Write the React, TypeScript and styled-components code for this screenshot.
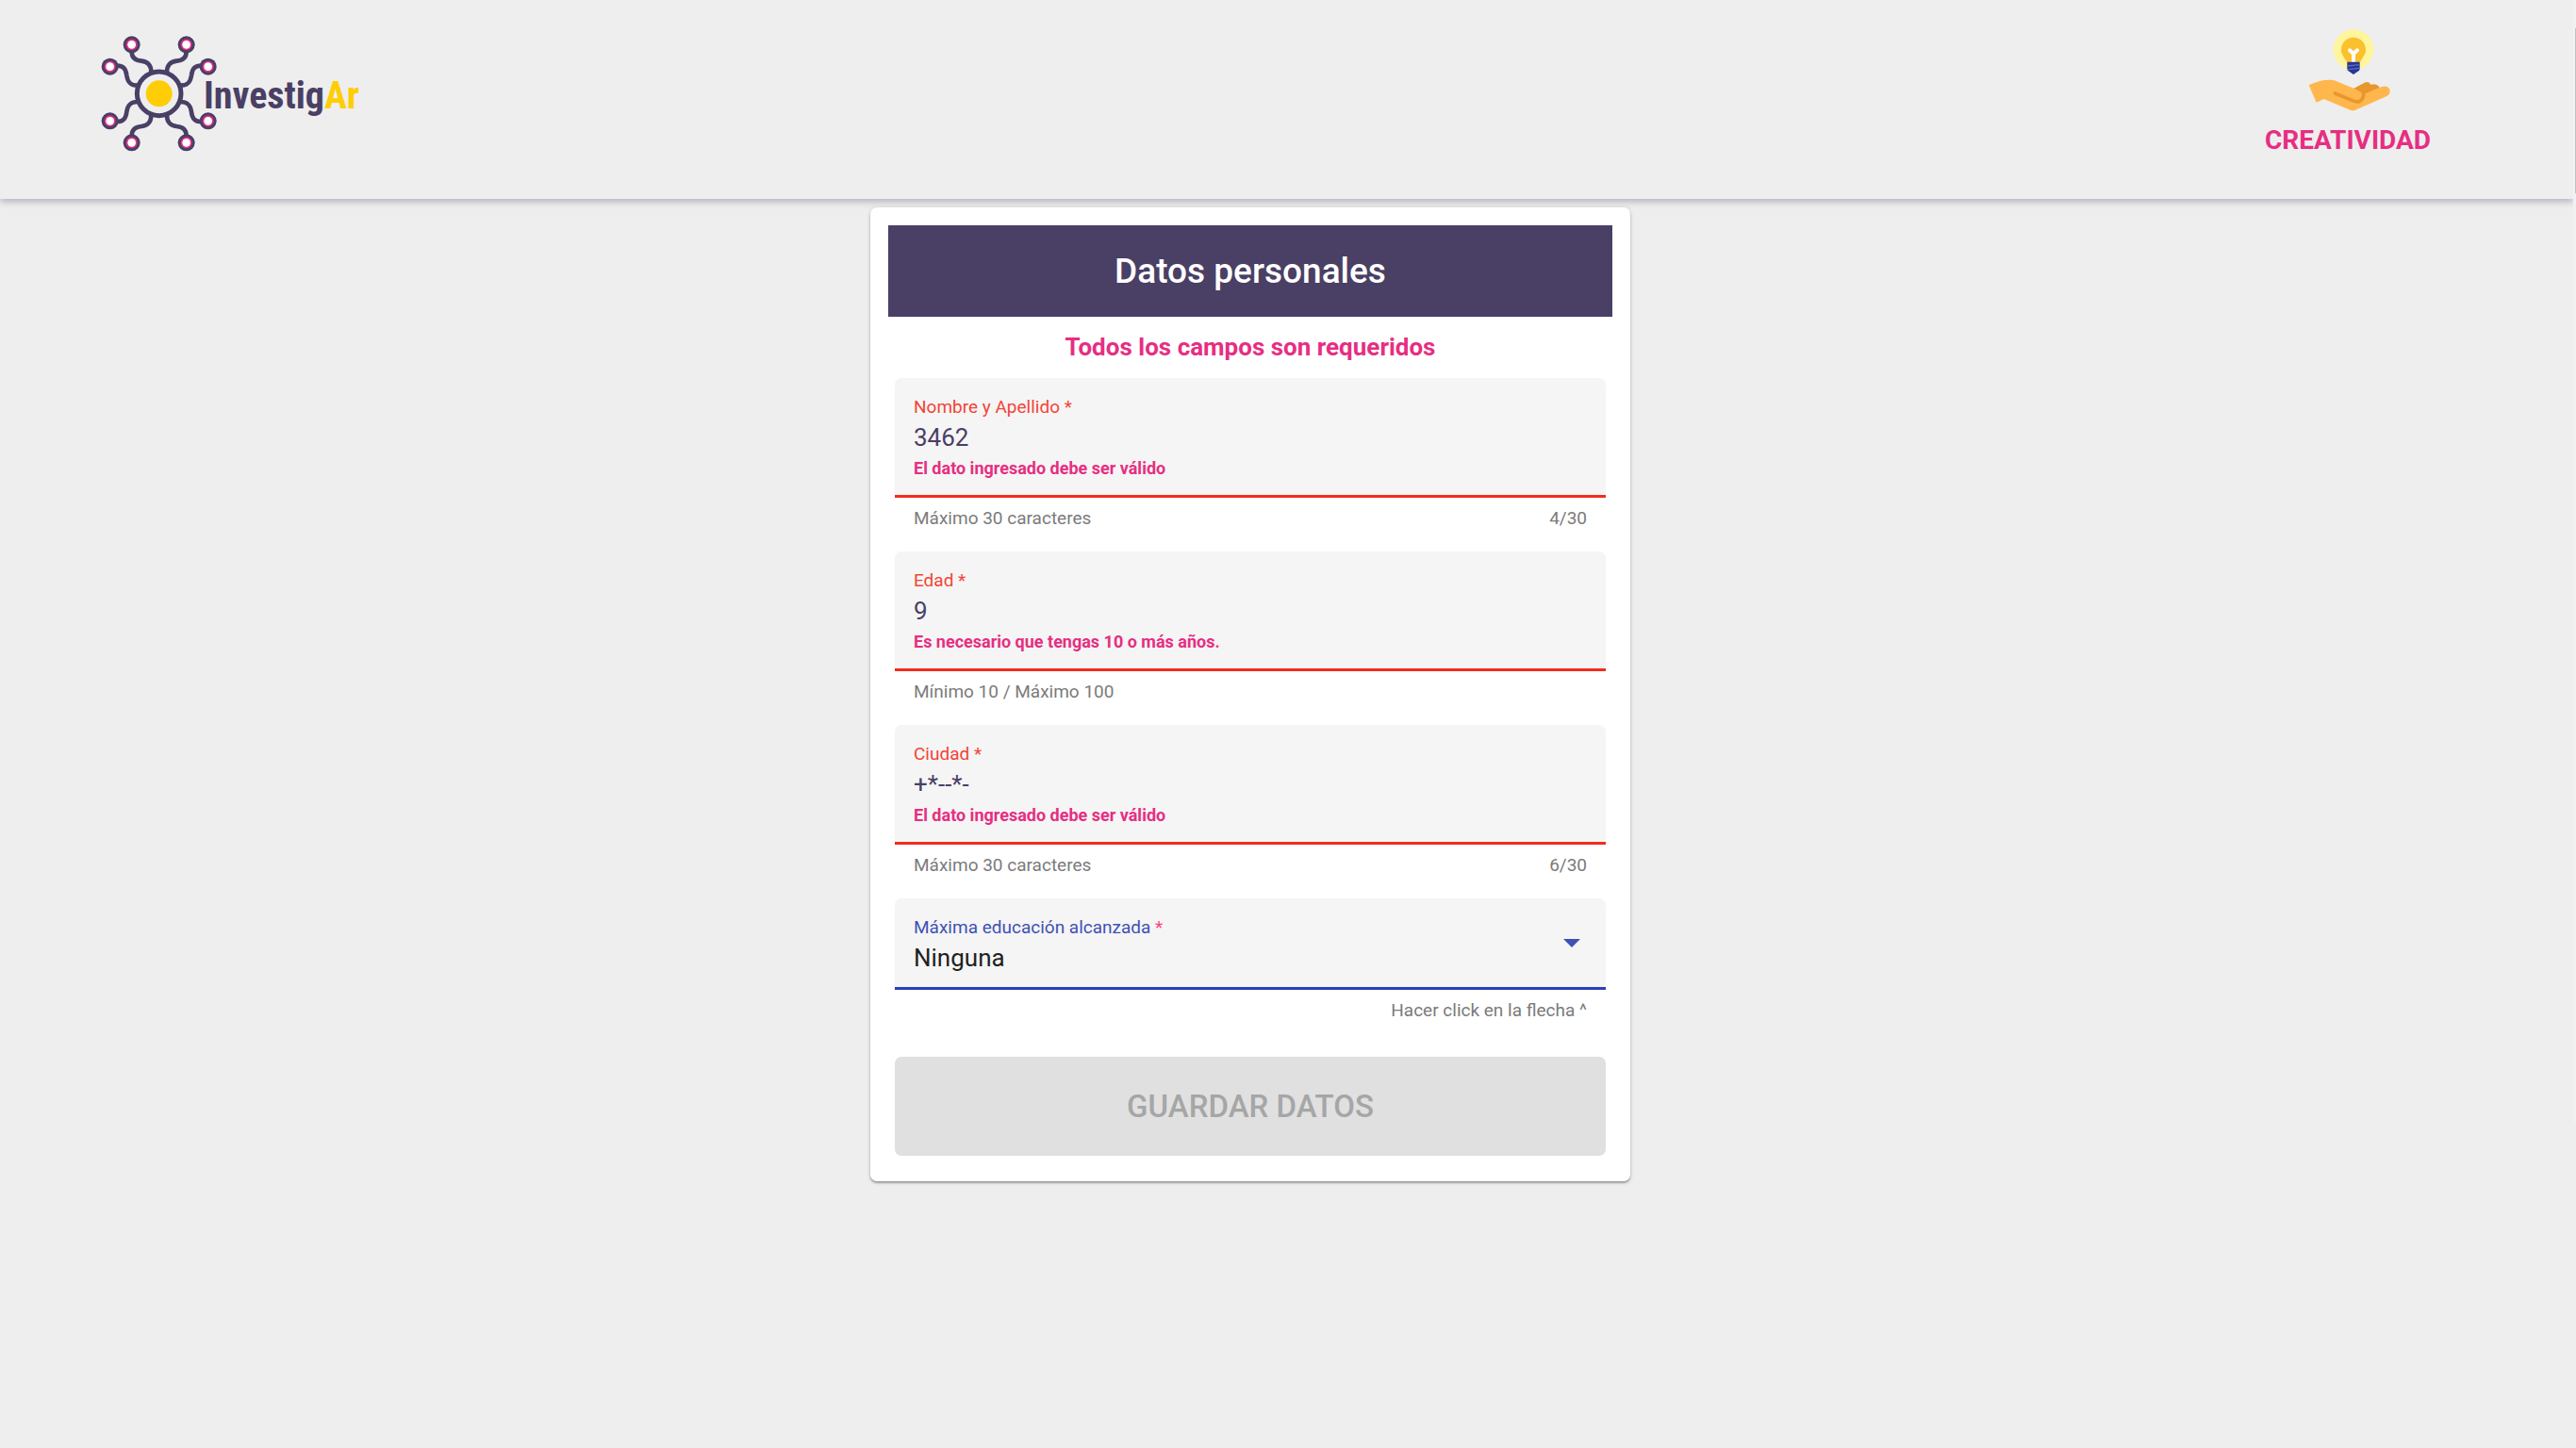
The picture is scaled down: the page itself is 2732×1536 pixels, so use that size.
import React, { useState } from "react";
import styled, { createGlobalStyle } from "styled-components";

const colors = {
  page: "#eeeeee",
  purple: "#4a3f65",
  pink: "#e62e82",
  red: "#f44336",
  redLine: "#f22c1e",
  indigo: "#3f51b5",
  indigoLine: "#2b3fb5",
  field: "#f5f5f5",
  hint: "#7b7b7b",
};

const GlobalStyle = createGlobalStyle`
  *, *::before, *::after { box-sizing: border-box; }
  body {
    margin: 0;
    background: ${colors.page};
    font-family: Roboto, "Liberation Sans", sans-serif;
  }
`;

const Page = styled.div`
  display: flex;
  min-height: 100vh;
`;

const Content = styled.div`
  flex: 1;
  min-width: 0;
`;

const ScrollTrack = styled.div`
  width: 3px;
  height: 1190px;
  padding: 30px 0 0 2px;
  background: #f1f1f1;
`;

const ScrollThumb = styled.div`
  height: 175px;
  background: #c1c1c1;
`;

const Header = styled.header`
  display: flex;
  justify-content: space-between;
  align-items: flex-start;
  height: 211px;
  padding: 30px 151px 0 107px;
  box-shadow: 0 3px 7px rgba(74, 63, 101, 0.34);
`;

const HomeLink = styled.a`
  display: block;
  padding-top: 7px;
`;

const Block = styled.svg`
  display: block;
`;

const Skill = styled.div`
  display: flex;
  flex-direction: column;
  align-items: center;
  gap: 15px;
`;

const SkillName = styled.span`
  color: ${colors.pink};
  font-size: 28px;
  font-weight: 700;
  line-height: 32px;
`;

const Main = styled.main`
  display: flex;
  justify-content: center;
  padding: 9px 77px 48px 0;
`;

const Card = styled.form`
  width: 100%;
  max-width: 806px;
  padding: 19px 19px 27px;
  border-radius: 7px;
  background: #ffffff;
  box-shadow: 0 2px 2px rgba(0, 0, 0, 0.28), 0 1px 5px rgba(0, 0, 0, 0.14);
`;

const Title = styled.h1`
  margin: 0;
  padding: 28px 0;
  background: ${colors.purple};
  color: #ffffff;
  font-size: 37px;
  font-weight: 500;
  line-height: 41px;
  text-align: center;
`;

const Notice = styled.p`
  margin: 0;
  padding: 16px 0;
  color: ${colors.pink};
  font-size: 26px;
  font-weight: 700;
  line-height: 33px;
  text-align: center;
`;

const Fields = styled.div`
  padding: 0 7px;
`;

const FieldBox = styled.div<{ $line: string }>`
  display: flex;
  align-items: center;
  padding: 19px 20px 15px;
  border-bottom: 3px solid ${(p) => p.$line};
  border-radius: 7px 7px 0 0;
  background: ${colors.field};
`;

const FieldStack = styled.div`
  display: flex;
  flex: 1;
  flex-direction: column;
  gap: 4px;
`;

const Label = styled.label<{ $color: string }>`
  color: ${(p) => p.$color};
  font-size: 19px;
  line-height: 24px;
`;

const Required = styled.span`
  color: #ff4081;
`;

const Input = styled.input`
  width: 100%;
  height: 32px;
  padding: 0;
  border: 0;
  outline: 0;
  background: transparent;
  color: ${colors.purple};
  font: 400 26px/32px Roboto, "Liberation Sans", sans-serif;
`;

const Select = styled.select`
  width: 100%;
  height: 32px;
  padding: 0;
  border: 0;
  outline: 0;
  appearance: none;
  background: transparent;
  color: #212121;
  font: 400 26px/32px Roboto, "Liberation Sans", sans-serif;
`;

const ErrorText = styled.strong`
  color: ${colors.pink};
  font-size: 18px;
  font-weight: 700;
  line-height: 26px;
`;

const HintRow = styled.div<{ $last?: boolean }>`
  display: flex;
  justify-content: ${(p) => (p.$last ? "flex-end" : "space-between")};
  padding: 10px 20px ${(p) => (p.$last ? 37 : 23)}px;
  color: ${colors.hint};
  font-size: 19px;
  line-height: 24px;
`;

const SaveButton = styled.button`
  display: block;
  width: 100%;
  padding: 32px 0;
  border: 0;
  border-radius: 7px;
  background: #e0e0e0;
  color: #a6a6a6;
  font: 500 33px/41px Roboto, "Liberation Sans", sans-serif;
`;

const NODES = [
  [149, 82], [323, 82], [392, 152], [392, 325],
  [323, 394], [149, 394], [80, 325], [80, 152],
];

function Arms() {
  return (
    <>
      <path d="M149 104 C149 124 160 132 180 134 C201 137 211 147 211 170" />
      <path d="M102 149 C124 149 131 161 133 180 C136 202 145 212 168 212" />
    </>
  );
}

function Logo() {
  return (
    <Block width="280" height="124" viewBox="51 51 840 372" role="img" aria-label="InvestigAr">
      <g fill="none" stroke={colors.purple} strokeWidth="14">
        <g><Arms /></g>
        <g transform="translate(472 0) scale(-1 1)"><Arms /></g>
        <g transform="translate(0 476) scale(1 -1)"><Arms /></g>
        <g transform="translate(472 476) scale(-1 -1)"><Arms /></g>
        <circle cx="236" cy="238" r="70" strokeWidth="15" />
      </g>
      <circle cx="236" cy="238" r="42" fill="#ffcd05" />
      {NODES.map(([x, y]) => (
        <g key={`${x}-${y}`}>
          <circle cx={x} cy={y} r="27" fill={colors.purple} />
          <circle cx={x} cy={y} r="18" fill={colors.pink} />
          <circle cx={x} cy={y} r="13" fill="#ffffff" />
        </g>
      ))}
      <text
        x="378"
        y="286"
        fontFamily="'Liberation Sans Narrow', 'Roboto Condensed', 'Open Sans Condensed', Roboto, sans-serif"
        fontSize="120"
        fontWeight="700"
        fill={colors.purple}
      >
        Investig<tspan fill="#ffcd05">Ar</tspan>
      </text>
    </Block>
  );
}

function IdeaIcon() {
  return (
    <Block width="90" height="88" viewBox="225 61 270 264" aria-hidden="true">
      <circle cx="378" cy="129" r="64" fill="#fff59d" />
      <path
        d="M378 90 C356 90 339 107 339 129 C339 145 350 154 357 169 H399 C406 154 417 145 417 129 C417 107 400 90 378 90 Z"
        fill="#fbc02d"
      />
      <path
        d="M366 131 L378 142 L390 131 M378 142 V169"
        fill="none"
        stroke="#ffffff"
        strokeWidth="12"
        strokeLinecap="round"
      />
      <path d="M358 168 H398 V190 Q398 196 392 198 L378 208 L364 198 Q358 196 358 190 Z" fill="#283593" />
      <path d="M358 181 L398 177 M360 192 L397 188" stroke="#5c6bc0" strokeWidth="4" />
      <path
        d="M372 256 L413 234 Q427 228 434 241 Q449 235 460 247 L462 262 L400 292 Z"
        fill="#e8962e"
      />
      <path
        d="M236 242 Q270 224 305 225 Q319 225 330 232 L381 253 L412 270 L468 247 Q488 241 494 258 Q496 271 484 277 L384 321 Q374 325 364 320 L284 286 L260 297 Z"
        fill="#ffb74d"
      />
      <path
        d="M319 268 L380 293 Q396 299 405 287 Q413 277 408 262"
        fill="none"
        stroke="#e8962e"
        strokeWidth="11"
        strokeLinecap="round"
      />
    </Block>
  );
}

function ArrowDown() {
  return (
    <Block width="32" height="32" viewBox="0 0 32 32" aria-hidden="true">
      <path d="M7 10 H25 L16 19 Z" fill={colors.indigo} />
    </Block>
  );
}

interface TextFieldProps {
  id: string;
  label: string;
  initial: string;
  error: string;
  hint: string;
  max?: number;
}

function TextField({ id, label, initial, error, hint, max }: TextFieldProps) {
  const [value, setValue] = useState(initial);
  return (
    <>
      <FieldBox $line={colors.redLine}>
        <FieldStack>
          <Label htmlFor={id} $color={colors.red}>{label} *</Label>
          <Input
            id={id}
            value={value}
            maxLength={max}
            aria-invalid="true"
            aria-describedby={`${id}-error`}
            onChange={(e) => setValue(e.target.value)}
          />
          <ErrorText id={`${id}-error`}>{error}</ErrorText>
        </FieldStack>
      </FieldBox>
      <HintRow>
        <span>{hint}</span>
        {max ? <span>{`${value.length}/${max}`}</span> : null}
      </HintRow>
    </>
  );
}

export default function App() {
  return (
    <>
      <GlobalStyle />
      <Page>
        <Content>
          <Header>
            <HomeLink href="#"><Logo /></HomeLink>
            <Skill>
              <IdeaIcon />
              <SkillName>CREATIVIDAD</SkillName>
            </Skill>
          </Header>
          <Main>
            <Card onSubmit={(e) => e.preventDefault()}>
              <Title>Datos personales</Title>
              <Notice>Todos los campos son requeridos</Notice>
              <Fields>
                <TextField
                  id="nombre"
                  label="Nombre y Apellido"
                  initial="3462"
                  error="El dato ingresado debe ser válido"
                  hint="Máximo 30 caracteres"
                  max={30}
                />
                <TextField
                  id="edad"
                  label="Edad"
                  initial="9"
                  error="Es necesario que tengas 10 o más años."
                  hint="Mínimo 10 / Máximo 100"
                />
                <TextField
                  id="ciudad"
                  label="Ciudad"
                  initial="+*--*-"
                  error="El dato ingresado debe ser válido"
                  hint="Máximo 30 caracteres"
                  max={30}
                />
                <FieldBox $line={colors.indigoLine}>
                  <FieldStack>
                    <Label htmlFor="educacion" $color={colors.indigo}>
                      Máxima educación alcanzada <Required>*</Required>
                    </Label>
                    <Select id="educacion" defaultValue="Ninguna">
                      <option>Ninguna</option>
                      <option>Primaria</option>
                      <option>Secundaria</option>
                      <option>Universitaria</option>
                    </Select>
                  </FieldStack>
                  <ArrowDown />
                </FieldBox>
                <HintRow $last>
                  <span>Hacer click en la flecha ^</span>
                </HintRow>
                <SaveButton type="submit" disabled>GUARDAR DATOS</SaveButton>
              </Fields>
            </Card>
          </Main>
        </Content>
        <ScrollTrack aria-hidden="true">
          <ScrollThumb />
        </ScrollTrack>
      </Page>
    </>
  );
}
